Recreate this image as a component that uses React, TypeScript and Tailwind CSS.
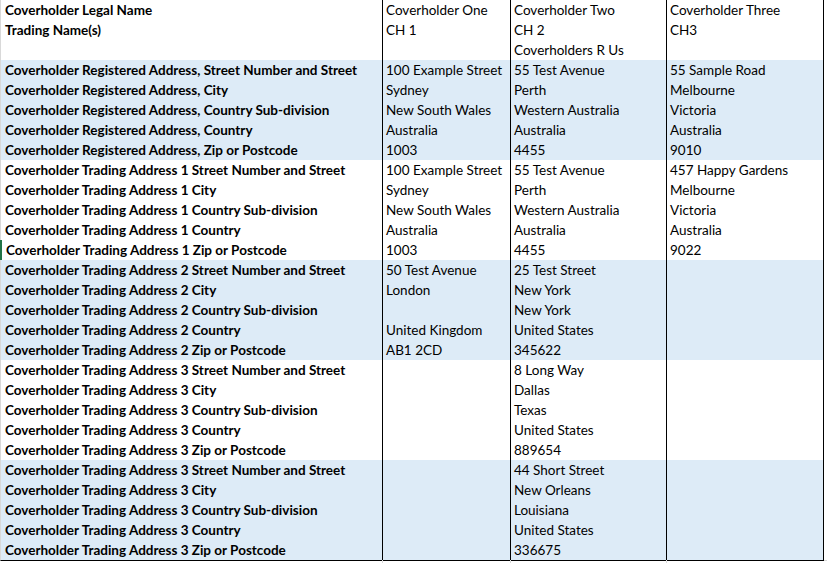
import React from "react";

type Row = { a: string; b?: string; c?: string; d?: string; blue?: boolean; tall?: boolean; green?: boolean };

const rows: Row[] = [
  { a: "Coverholder Legal Name", b: "Coverholder One", c: "Coverholder Two", d: "Coverholder Three" },
  { a: "Trading Name(s)", b: "CH 1", c: "CH 2\nCoverholders R Us", d: "CH3", tall: true },
  { a: "Coverholder Registered Address, Street Number and Street", b: "100 Example Street", c: "55 Test Avenue", d: "55 Sample Road", blue: true },
  { a: "Coverholder Registered Address, City", b: "Sydney", c: "Perth", d: "Melbourne", blue: true },
  { a: "Coverholder Registered Address, Country Sub-division", b: "New South Wales", c: "Western Australia", d: "Victoria", blue: true },
  { a: "Coverholder Registered Address, Country", b: "Australia", c: "Australia", d: "Australia", blue: true },
  { a: "Coverholder Registered Address, Zip or Postcode", b: "1003", c: "4455", d: "9010", blue: true },
  { a: "Coverholder Trading Address 1 Street Number and Street", b: "100 Example Street", c: "55 Test Avenue", d: "457 Happy Gardens" },
  { a: "Coverholder Trading Address 1 City", b: "Sydney", c: "Perth", d: "Melbourne" },
  { a: "Coverholder Trading Address 1 Country Sub-division", b: "New South Wales", c: "Western Australia", d: "Victoria" },
  { a: "Coverholder Trading Address 1 Country", b: "Australia", c: "Australia", d: "Australia" },
  { a: "Coverholder Trading Address 1 Zip or Postcode", b: "1003", c: "4455", d: "9022", green: true },
  { a: "Coverholder Trading Address 2 Street Number and Street", b: "50 Test Avenue", c: "25 Test Street", blue: true },
  { a: "Coverholder Trading Address 2 City", b: "London", c: "New York", blue: true },
  { a: "Coverholder Trading Address 2 Country Sub-division", c: "New York", blue: true },
  { a: "Coverholder Trading Address 2 Country", b: "United Kingdom", c: "United States", blue: true },
  { a: "Coverholder Trading Address 2 Zip or Postcode", b: "AB1 2CD", c: "345622", blue: true },
  { a: "Coverholder Trading Address 3 Street Number and Street", c: "8 Long Way" },
  { a: "Coverholder Trading Address 3 City", c: "Dallas" },
  { a: "Coverholder Trading Address 3 Country Sub-division", c: "Texas" },
  { a: "Coverholder Trading Address 3 Country", c: "United States" },
  { a: "Coverholder Trading Address 3 Zip or Postcode", c: "889654" },
  { a: "Coverholder Trading Address 3 Street Number and Street", c: "44 Short Street", blue: true },
  { a: "Coverholder Trading Address 3 City", c: "New Orleans", blue: true },
  { a: "Coverholder Trading Address 3 Country Sub-division", c: "Louisiana", blue: true },
  { a: "Coverholder Trading Address 3 Country", c: "United States", blue: true },
  { a: "Coverholder Trading Address 3 Zip or Postcode", c: "336675", blue: true },
];

function Lines({ text }: { text?: string }) {
  if (!text) return null;
  return (
    <>
      {text.split("\n").map((t, i) => (
        <div key={i} className="h-5 leading-5 whitespace-nowrap">
          {t}
        </div>
      ))}
    </>
  );
}

export default function App() {
  return (
    <div
      className="w-[827px] h-[563px] bg-white text-black overflow-hidden text-[13.5px]"
      style={{ fontFamily: "Lato, 'Liberation Sans', sans-serif" }}
    >
      {rows.map((r, i) => {
        const last = i === rows.length - 1;
        const bg = r.blue ? "bg-[#ddebf7]" : "bg-white";
        const bb = last
          ? "border-b border-b-black"
          : r.blue
          ? "border-b border-b-transparent"
          : "border-b border-b-[#d9d9d9]";
        const h = r.tall ? "h-10" : "h-5";
        return (
          <div key={i} className={`grid grid-cols-[382px_128px_156px_158px_3px] ${h}`}>
            <div
              className={`${bg} ${bb} pl-[4px] font-bold ${
                r.green ? "border-l-2 border-l-[#217346]" : "border-l border-l-[#d9d9d9]"
              }`}
            >
              <Lines text={r.a} />
            </div>
            <div className={`${bg} ${bb} border-l border-l-black pl-[3px]`}>
              <Lines text={r.b} />
            </div>
            <div className={`${bg} ${bb} border-l border-l-black pl-[3px]`}>
              <Lines text={r.c} />
            </div>
            <div className={`${bg} ${bb} border-l border-r border-l-black border-r-black pl-[3px]`}>
              <Lines text={r.d} />
            </div>
            <div className="bg-white border-b border-b-[#d9d9d9]" />
          </div>
        );
      })}
      <div className="grid grid-cols-[382px_128px_156px_158px_3px] h-[3px]">
        <div />
        <div className="border-l border-l-[#d9d9d9]" />
        <div className="border-l border-l-[#d9d9d9]" />
        <div className="border-l border-l-[#d9d9d9]" />
        <div />
      </div>
    </div>
  );
}
